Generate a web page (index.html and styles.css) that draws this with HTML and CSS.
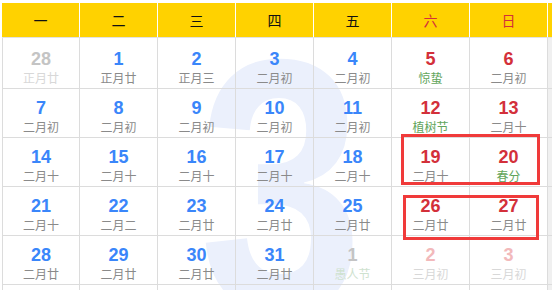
FILE: index.html
```html
<!DOCTYPE html>
<html lang="zh">
<head>
<meta charset="utf-8">
<title>2021年3月日历</title>
<link rel="stylesheet" href="styles.css">
</head>
<body>
<div class="page">
  <div class="cal">
    <div class="watermark" aria-hidden="true">3</div>
    <div class="head">
      <div class="hcell">一</div>
      <div class="hcell">二</div>
      <div class="hcell">三</div>
      <div class="hcell">四</div>
      <div class="hcell">五</div>
      <div class="hcell weekend">六</div>
      <div class="hcell weekend">日</div>
      <div class="hcell extra"></div>
    </div>
    <div class="grid">
      <div class="cell first"><span class="num other">28</span><span class="lunar other">正月廿</span></div>
      <div class="cell first"><span class="num">1</span><span class="lunar">正月廿</span></div>
      <div class="cell first"><span class="num">2</span><span class="lunar">正月三</span></div>
      <div class="cell first"><span class="num">3</span><span class="lunar">二月初</span></div>
      <div class="cell first"><span class="num">4</span><span class="lunar">二月初</span></div>
      <div class="cell first"><span class="num red">5</span><span class="lunar fest">惊蛰</span></div>
      <div class="cell first"><span class="num red">6</span><span class="lunar">二月初</span></div>
      <div class="cell first extra"></div>

      <div class="cell"><span class="num">7</span><span class="lunar">二月初</span></div>
      <div class="cell"><span class="num">8</span><span class="lunar">二月初</span></div>
      <div class="cell"><span class="num">9</span><span class="lunar">二月初</span></div>
      <div class="cell"><span class="num">10</span><span class="lunar">二月初</span></div>
      <div class="cell"><span class="num">11</span><span class="lunar">二月初</span></div>
      <div class="cell"><span class="num red">12</span><span class="lunar fest">植树节</span></div>
      <div class="cell"><span class="num red">13</span><span class="lunar">二月十</span></div>
      <div class="cell extra"></div>

      <div class="cell"><span class="num">14</span><span class="lunar">二月十</span></div>
      <div class="cell"><span class="num">15</span><span class="lunar">二月十</span></div>
      <div class="cell"><span class="num">16</span><span class="lunar">二月十</span></div>
      <div class="cell"><span class="num">17</span><span class="lunar">二月十</span></div>
      <div class="cell"><span class="num">18</span><span class="lunar">二月十</span></div>
      <div class="cell"><span class="num red">19</span><span class="lunar">二月十</span></div>
      <div class="cell"><span class="num red">20</span><span class="lunar fest">春分</span></div>
      <div class="cell extra"></div>

      <div class="cell"><span class="num">21</span><span class="lunar">二月十</span></div>
      <div class="cell"><span class="num">22</span><span class="lunar">二月二</span></div>
      <div class="cell"><span class="num">23</span><span class="lunar">二月廿</span></div>
      <div class="cell"><span class="num">24</span><span class="lunar">二月廿</span></div>
      <div class="cell"><span class="num">25</span><span class="lunar">二月廿</span></div>
      <div class="cell"><span class="num red">26</span><span class="lunar">二月廿</span></div>
      <div class="cell"><span class="num red">27</span><span class="lunar">二月廿</span></div>
      <div class="cell extra"></div>

      <div class="cell"><span class="num">28</span><span class="lunar">二月廿</span></div>
      <div class="cell"><span class="num">29</span><span class="lunar">二月廿</span></div>
      <div class="cell"><span class="num">30</span><span class="lunar">二月廿</span></div>
      <div class="cell"><span class="num">31</span><span class="lunar">二月廿</span></div>
      <div class="cell"><span class="num other">1</span><span class="lunar fest other-fest">愚人节</span></div>
      <div class="cell"><span class="num other-red">2</span><span class="lunar other-lunar">三月初</span></div>
      <div class="cell"><span class="num other-red">3</span><span class="lunar other-lunar">三月初</span></div>
      <div class="cell extra"></div>

      <div class="cell last"></div>
      <div class="cell last"></div>
      <div class="cell last"></div>
      <div class="cell last"></div>
      <div class="cell last"></div>
      <div class="cell last"></div>
      <div class="cell last"></div>
      <div class="cell last extra"></div>
    </div>
    <div class="mark mark-1"></div>
    <div class="mark mark-2"></div>
  </div>
</div>
</body>
</html>
```

FILE: styles.css
```css
html, body {
  margin: 0;
  padding: 0;
  background: #fff;
  overflow: hidden;
}

.page {
  padding: 3px 0 0 2px;
  width: 600px;
  height: 287px;
  overflow: hidden;
}

.cal {
  position: relative;
  font-family: "Noto Sans CJK SC", "Noto Sans", sans-serif;
}

.watermark {
  position: absolute;
  left: 197px;
  top: 2px;
  font-family: "Liberation Sans", Arial, sans-serif;
  font-weight: bold;
  font-size: 360px;
  line-height: 1;
  color: #ebf0fc;
  transform: scaleX(0.82);
  transform-origin: left top;
  z-index: 0;
}

.head {
  position: relative;
  z-index: 1;
  display: grid;
  grid-template-columns: repeat(7, 78px) 1fr;
  height: 35px;
  background: #ffd200;
  border-bottom: 1px solid #e2e2e2;
  box-sizing: border-box;
}

.hcell {
  border-right: 1px solid #fff;
  box-sizing: border-box;
  display: flex;
  align-items: center;
  justify-content: center;
  font-size: 14px;
  color: #111;
  line-height: 1;
}

.hcell.weekend {
  color: #d3303a;
}

.hcell.extra {
  border-right: none;
}

.grid {
  position: relative;
  z-index: 1;
  display: grid;
  grid-template-columns: repeat(7, 78px) 1fr;
}

.cell {
  height: 49px;
  box-sizing: border-box;
  border-right: 1px solid #dcdcdc;
  border-bottom: 1px solid #dcdcdc;
  display: flex;
  flex-direction: column;
  align-items: center;
  padding-top: 9px;
}

.cell:nth-child(8n+1) {
  border-left: 1px solid #dcdcdc;
}

.cell.first {
  height: 51px;
  padding-top: 11px;
}

.cell.last {
  height: 4px;
}

.cell.extra {
  background: #f0f0f0;
  border-right: none;
}

.num {
  font-family: "Liberation Sans", Arial, sans-serif;
  font-weight: bold;
  font-size: 18px;
  line-height: 20px;
  color: #3a86fa;
}

.num.red {
  color: #d3303a;
}

.num.other {
  color: #c4c4c4;
}

.num.other-red {
  color: #f2b9bb;
}

.lunar {
  font-size: 12px;
  line-height: 17px;
  color: #8a8a8a;
}

.lunar.fest {
  color: #62a55c;
}

.lunar.other {
  color: #d8d8d8;
}

.lunar.other-fest {
  color: #cfe2cf;
}

.lunar.other-lunar {
  color: #d8d8d8;
}

.mark {
  position: absolute;
  z-index: 2;
  border: 3px solid #f03a3a;
  box-sizing: border-box;
}

.mark-1 {
  left: 399px;
  top: 131px;
  width: 139px;
  height: 51px;
}

.mark-2 {
  left: 401px;
  top: 192px;
  width: 136px;
  height: 45px;
}
```
